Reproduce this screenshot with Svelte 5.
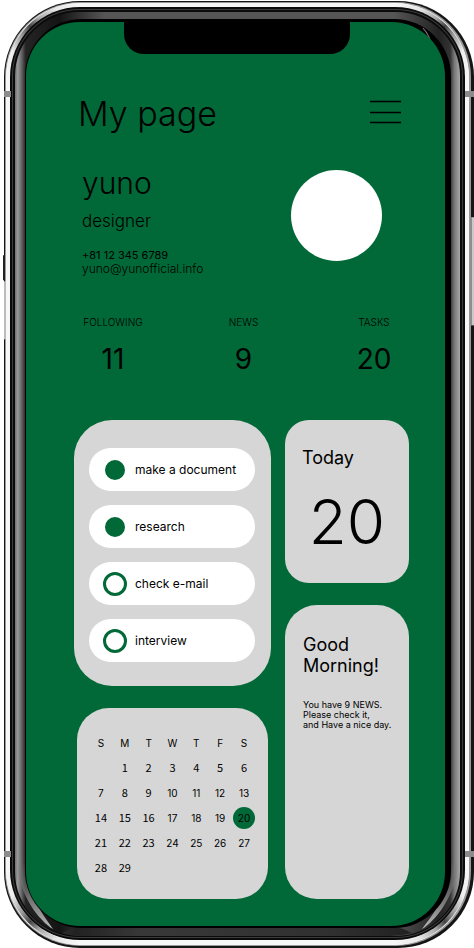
<script>
  const stats = [
    { label: 'FOLLOWING', value: 11 },
    { label: 'NEWS', value: 9 },
    { label: 'TASKS', value: 20 }
  ];

  let tasks = $state([
    { name: 'make a document', done: true },
    { name: 'research', done: true },
    { name: 'check e-mail', done: false },
    { name: 'interview', done: false }
  ]);

  const weekdays = ['S', 'M', 'T', 'W', 'T', 'F', 'S'];
  const today = 20;
  const weeks = [
    ['', 1, 2, 3, 4, 5, 6],
    [7, 8, 9, 10, 11, 12, 13],
    [14, 15, 16, 17, 18, 19, 20],
    [21, 22, 23, 24, 25, 26, 27],
    [28, 29, '', '', '', '', '']
  ];
  const humanist = [1, 2, 3, 4, 5, 6, 8, 9, 14, 15, 16, 21, 22, 23, 28, 29];
</script>

<div class="phone">
  <svg class="frame" viewBox="0 0 474 948" preserveAspectRatio="none" aria-hidden="true">
    <defs>
      <linearGradient id="side" x1="15" x2="461" y1="0" y2="0" gradientUnits="userSpaceOnUse">
        <stop offset="0" stop-color="#6e6e6e" />
        <stop offset="0.006" stop-color="#9a9a9a" />
        <stop offset="0.013" stop-color="#707070" />
        <stop offset="0.024" stop-color="#242424" />
        <stop offset="0.1" stop-color="#141414" />
        <stop offset="0.2" stop-color="#555" />
        <stop offset="0.85" stop-color="#555" />
        <stop offset="0.95" stop-color="#222" />
        <stop offset="0.976" stop-color="#333" />
        <stop offset="0.985" stop-color="#777" />
        <stop offset="1" stop-color="#b0b0b0" />
      </linearGradient>
      <linearGradient id="base" x1="0" x2="474" y1="0" y2="0" gradientUnits="userSpaceOnUse">
        <stop offset="0.08" stop-color="#444" />
        <stop offset="0.16" stop-color="#222" />
        <stop offset="0.3" stop-color="#383838" />
        <stop offset="0.7" stop-color="#303030" />
        <stop offset="0.86" stop-color="#222" />
        <stop offset="0.92" stop-color="#444" />
      </linearGradient>
      <linearGradient id="sliver" x1="0" x2="0" y1="860" y2="928" gradientUnits="userSpaceOnUse">
        <stop offset="0" stop-color="#777" stop-opacity="0" />
        <stop offset="0.6" stop-color="#777" />
        <stop offset="1" stop-color="#bbb" />
      </linearGradient>
      <linearGradient id="shine" x1="8" y1="76" x2="80" y2="4" gradientUnits="userSpaceOnUse">
        <stop offset="0" stop-color="#f6f6f6" />
        <stop offset="0.2" stop-color="#eee" />
        <stop offset="0.38" stop-color="#999" />
        <stop offset="0.5" stop-color="#444" />
        <stop offset="0.62" stop-color="#aaa" />
        <stop offset="0.8" stop-color="#e8e8e8" />
        <stop offset="1" stop-color="#f7f7f7" />
      </linearGradient>
      <g id="corner">
        <path d="M8 79A74 74 0 0 1 80 5" fill="none" stroke="url(#shine)" stroke-width="4" />
      </g>
    </defs>
    <rect x="4" y="1" width="470" height="946" rx="76" fill="#151515" />
    <rect x="5" y="2" width="466" height="943" rx="75" fill="#999" />
    <rect x="6" y="3" width="463" height="941" rx="74" fill="#f7f7f7" />
    <use href="#corner" />
    <use href="#corner" transform="matrix(-1 0 0 1 475 0)" />
    <use href="#corner" transform="matrix(1 0 0 -1 0 947)" />
    <use href="#corner" transform="matrix(-1 0 0 -1 475 947)" />
    <rect x="10" y="7" width="455" height="932" rx="70" fill="#0b0b0b" />
    <rect x="12.500" y="9.500" width="450" height="927" rx="67" fill="none" stroke="#3c3c3c" />
    <rect x="15" y="12" width="445" height="923" rx="64" fill="url(#side)" />
    <path d="M62 932Q72 926 84 926H390Q402 926 412 932Q400 935 390 935H84Q74 935 62 932Z" fill="url(#base)" />
    <path d="M17 860C19 896 40 920 53 928C44 914 30 900 25 860Z" fill="url(#sliver)" />
    <path d="M458 860C456 896 435 920 422 928C432 914 446 900 451 860Z" fill="url(#sliver)" />
    <rect x="25" y="19" width="426" height="908" rx="57" fill="#000" />
    <path d="M433 50C431 40 427 32 423 28" fill="none" stroke="#777" stroke-width="1" />
    <path d="M4 255V280" stroke="#222" stroke-width="2" />
    <rect x="4" y="281" width="2" height="58" fill="#bbb" />
    <rect x="470" y="217" width="4" height="108" fill="#c9c9c9" />
    <path d="M471 217V325" stroke="#555" />
    <path d="M4 94H11M465 94H474M4 853H11M465 853H474" stroke="#8b8b8b" stroke-width="6" />
  </svg>

  <main class="screen">
    <div class="notch"></div>
    <header>
      <h1>My page</h1>
      <button class="menu" aria-label="Menu">
        <svg viewBox="0 0 31 24" width="31" height="24" aria-hidden="true">
          <path d="M0 1.500H31M0 12.500H31M0 22.500H31" stroke="#000" stroke-width="1.500" />
        </svg>
      </button>
    </header>

    <section class="profile">
      <div>
        <h2>yuno</h2>
        <p class="role">designer</p>
        <p class="phone-number">+81 12 345 6789</p>
        <p class="email">yuno@yunofficial.info</p>
      </div>
      <div class="avatar"></div>
    </section>

    <dl class="stats">
      {#each stats as stat}
        <div>
          <dt>{stat.label}</dt>
          <dd>{stat.value}</dd>
        </div>
      {/each}
    </dl>

    <div class="board">
      <div class="column">
        <section class="card tasks">
          {#each tasks as task}
            <label>
              <input type="checkbox" bind:checked={task.done} />
              <span>{task.name}</span>
            </label>
          {/each}
        </section>

        <section class="card calendar">
          <table>
            <thead>
              <tr>
                {#each weekdays as day}<th>{day}</th>{/each}
              </tr>
            </thead>
            <tbody>
              {#each weeks as week}
                <tr>
                  {#each week as day}
                    <td><span class:today={day === today} class:humanist={humanist.includes(day)}>{day}</span></td>
                  {/each}
                </tr>
              {/each}
            </tbody>
          </table>
        </section>
      </div>

      <div class="column">
        <section class="card date">
          <h3>Today</h3>
          <p>{today}</p>
        </section>
        <section class="card greeting">
          <h3>Good<br />Morning!</h3>
          <p>You have 9 NEWS.<br />Please check it,<br />and Have a nice day.</p>
        </section>
      </div>
    </div>
  </main>
</div>

<style>
  :global(body) {
    background: #fff;
  }

  .phone {
    position: relative;
    box-sizing: border-box;
    padding: 22px 29px 23px 26px;
    color: #000;
    font-family: Inter, 'Liberation Sans', sans-serif;
    font-weight: 400;
  }

  .frame {
    position: absolute;
    inset: 0;
    width: 100%;
    height: 100%;
  }

  .screen {
    position: relative;
    box-sizing: border-box;
    padding: 0 36px 27px 48px;
    border-radius: 54px;
    background: #006937;
  }

  .notch {
    position: absolute;
    top: -1px;
    left: 98px;
    right: 95px;
    height: 33px;
    border-radius: 0 0 20px 20px;
    background: #000;
  }

  h1, h2, h3, p, dl, dd {
    margin: 0;
    font-weight: 300;
  }

  header {
    display: flex;
    align-items: center;
    justify-content: space-between;
    padding: 70px 8px 0 4px;
  }

  h1 {
    font-size: 34px;
    line-height: 44px;
  }

  .menu {
    display: flex;
    margin: 0 0 4px;
    padding: 0;
    border: 0;
    background: none;
  }

  .profile {
    display: flex;
    justify-content: space-between;
    padding: 29px 27px 0 8px;
  }

  h2 {
    font-size: 30px;
    line-height: 36px;
  }

  .role {
    margin: 8px 0 15px;
    font-size: 17px;
    line-height: 24px;
  }

  .phone-number,
  .email {
    font-size: 11px;
    line-height: 14px;
    font-weight: 400;
  }

  .email {
    font-size: 12px;
    font-weight: 300;
  }

  .avatar {
    width: 91px;
    height: 91px;
    margin-top: 5px;
    border-radius: 50%;
    background: #fff;
  }

  .stats {
    display: flex;
    justify-content: space-between;
    padding: 39px 4px 0 8px;
    text-align: center;
  }

  .stats div {
    width: 62px;
  }

  dt {
    font-size: 10px;
    line-height: 14px;
  }

  dd {
    margin-top: 13px;
    font-size: 28px;
    font-weight: 400;
    line-height: 34px;
  }

  .board {
    display: grid;
    grid-template-columns: 197fr 124fr;
    gap: 14px;
    padding-top: 44px;
  }

  .column {
    display: flex;
    flex-direction: column;
    gap: 22px;
  }

  .card {
    box-sizing: border-box;
    background: #d6d6d6;
  }

  .tasks {
    display: flex;
    flex-direction: column;
    gap: 14px;
    padding: 28px 16px 24px 15px;
    border-radius: 38px;
  }

  label {
    display: flex;
    align-items: center;
    gap: 8px;
    height: 43px;
    padding-left: 14px;
    border-radius: 22px;
    background: #fff;
    font-size: 12px;
    white-space: nowrap;
  }

  input {
    box-sizing: border-box;
    width: 24px;
    height: 24px;
    margin: 0;
    border: 3px solid #006937;
    border-radius: 50%;
    appearance: none;
  }

  input:checked {
    width: 20px;
    height: 20px;
    margin: 2px;
    background: #006937;
  }

  .calendar {
    margin: 0 3px;
    padding: 22px 12px 19px;
    border-radius: 32px;
  }

  table {
    width: 100%;
    table-layout: fixed;
    border-collapse: collapse;
    font-size: 10px;
    line-height: 22px;
    text-align: center;
  }

  th, td {
    height: 25px;
    padding: 0;
    font-weight: 400;
  }

  .humanist {
    font-family: 'Noto Sans CJK JP', 'Noto Sans', sans-serif;
    font-size: 11px;
    line-height: 1;
  }

  .today {
    display: block;
    width: 22px;
    height: 22px;
    margin: 0 auto;
    border-radius: 50%;
    background: #006937;
  }

  .date {
    padding: 24px 17px 26px;
    border-radius: 24px;
  }

  h3 {
    font-size: 18px;
    font-weight: 400;
    line-height: 21px;
  }

  .date h3 {
    line-height: 28px;
  }

  .date p {
    margin-top: 14px;
    font-size: 62px;
    line-height: 71px;
    text-align: center;
  }

  .greeting {
    flex: 1;
    padding: 29px 10px 20px 18px;
    border-radius: 32px;
  }

  .greeting p {
    margin-top: 24px;
    font-size: 9px;
    font-weight: 400;
    line-height: 10px;
    white-space: nowrap;
  }
</style>
